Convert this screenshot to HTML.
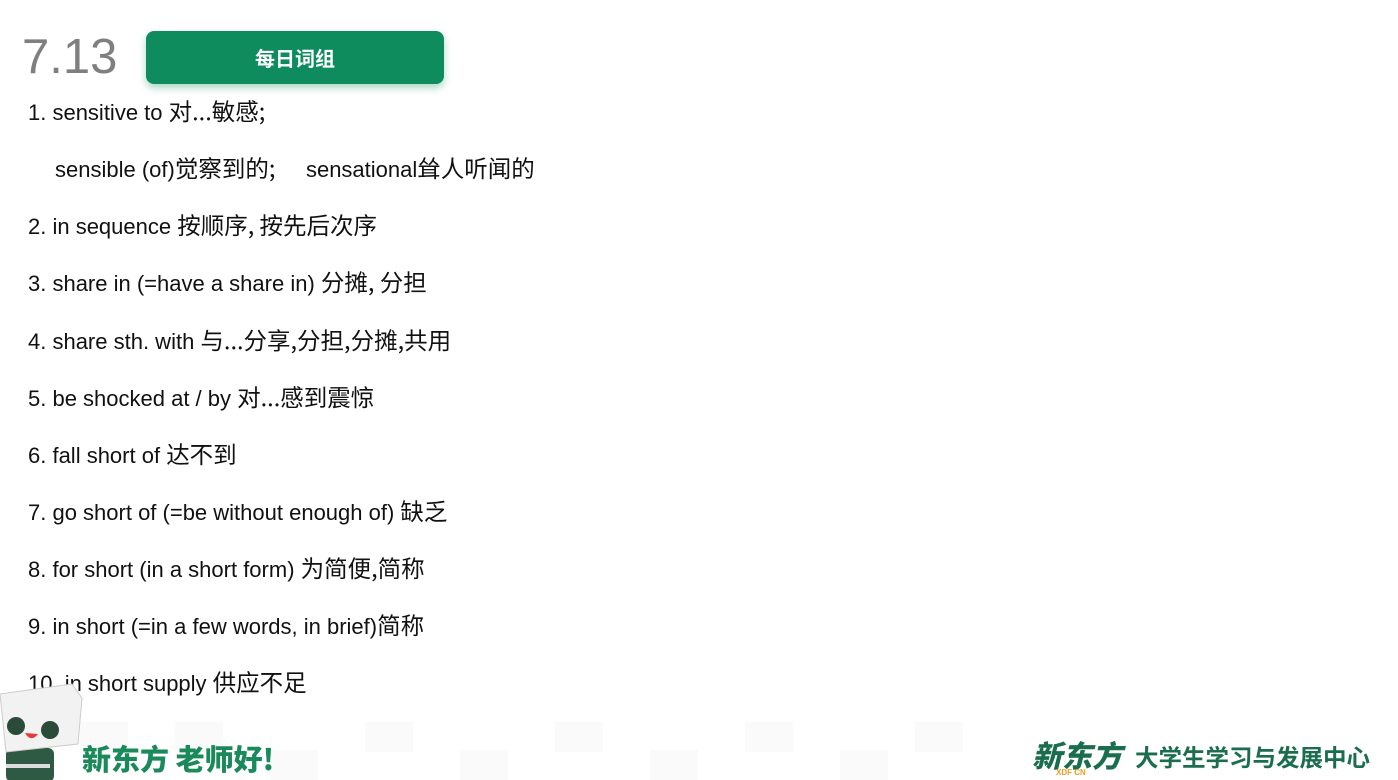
<!DOCTYPE html>
<html><head><meta charset="utf-8"><style>
body{margin:0;width:1398px;height:780px;background:#fff;position:relative;overflow:hidden;font-family:"Liberation Sans","Noto Sans CJK SC",sans-serif}
.t{position:absolute;left:28px;font-size:22px;color:#111;white-space:nowrap;line-height:26px}
.t b{font-weight:normal;font-size:23.5px;font-family:"Noto Sans CJK SC",sans-serif}
.cn{font-family:"Noto Sans CJK SC",sans-serif}
.chk{position:absolute;top:720px;width:48px;height:30px;background:#fafafa}
</style></head><body>
<div style="position:absolute;left:22px;top:27px;font-size:49px;color:#7f7f7f;line-height:60px">7.13</div>
<div style="position:absolute;left:146px;top:31px;width:298px;height:53px;background:#0e8c5e;border-radius:8px;box-shadow:0 4px 8px rgba(14,140,94,.35);color:#fff;font-weight:bold;font-size:20px;text-align:center;line-height:53px" class="cn">每日词组</div>
<div class="t" style="top:97px">1. sensitive to <b>对...敏感;</b></div>
<div class="t" style="top:154px;left:55px">sensible (of)<b>觉察到的;</b>&nbsp;&nbsp;&nbsp;&nbsp; sensational<b>耸人听闻的</b></div>
<div class="t" style="top:211px">2. in sequence <b>按顺序, 按先后次序</b></div>
<div class="t" style="top:268px">3. share in (=have a share in) <b>分摊, 分担</b></div>
<div class="t" style="top:326px">4. share sth. with <b>与...分享,分担,分摊,共用</b></div>
<div class="t" style="top:383px">5. be shocked at / by <b>对...感到震惊</b></div>
<div class="t" style="top:440px">6. fall short of <b>达不到</b></div>
<div class="t" style="top:497px">7. go short of (=be without enough of) <b>缺乏</b></div>
<div class="t" style="top:554px">8. for short (in a short form) <b>为简便,简称</b></div>
<div class="t" style="top:611px">9. in short (=in a few words, in brief)<b>简称</b></div>
<div class="t" style="top:668px">10. in short supply <b>供应不足</b></div>
<div class="chk" style="left:80px;top:722px"></div><div class="chk" style="left:175px;top:722px"></div><div class="chk" style="left:270px;top:750px"></div><div class="chk" style="left:365px;top:722px"></div><div class="chk" style="left:460px;top:750px"></div><div class="chk" style="left:555px;top:722px"></div><div class="chk" style="left:650px;top:750px"></div><div class="chk" style="left:745px;top:722px"></div><div class="chk" style="left:840px;top:750px"></div><div class="chk" style="left:915px;top:722px"></div>
<svg style="position:absolute;left:0;top:680px" width="85" height="100">
<rect x="6" y="68" width="48" height="34" rx="6" fill="#2e5a44"/>
<rect x="6" y="84" width="44" height="4" fill="#ddd"/>
<path d="M0 14 L72 4 L82 18 L78 64 L6 72 Z" fill="#f2f2f2" stroke="#ccc"/>
<circle cx="16" cy="46" r="9" fill="#2a4a3a"/><circle cx="50" cy="50" r="9" fill="#2a4a3a"/>
<path d="M25 53 Q31 63 38 54 Z" fill="#e63a3a"/>
</svg>
<div class="cn" style="position:absolute;left:82px;top:737px;font-size:29px;font-weight:900;color:#1b8a5a;line-height:42px">新东方 老师好!</div>
<div class="cn" style="position:absolute;left:1032px;top:736px;font-size:30px;font-weight:900;font-style:italic;color:#1a6e4e;line-height:36px">新东方</div>
<div style="position:absolute;left:1056px;top:768px;font-size:8px;font-weight:bold;color:#e8a020">XDF CN</div>
<div class="cn" style="position:absolute;left:1135px;top:741px;font-size:23.5px;font-weight:bold;color:#1a6e4e;line-height:30px">大学生学习与发展中心</div>
</body></html>
